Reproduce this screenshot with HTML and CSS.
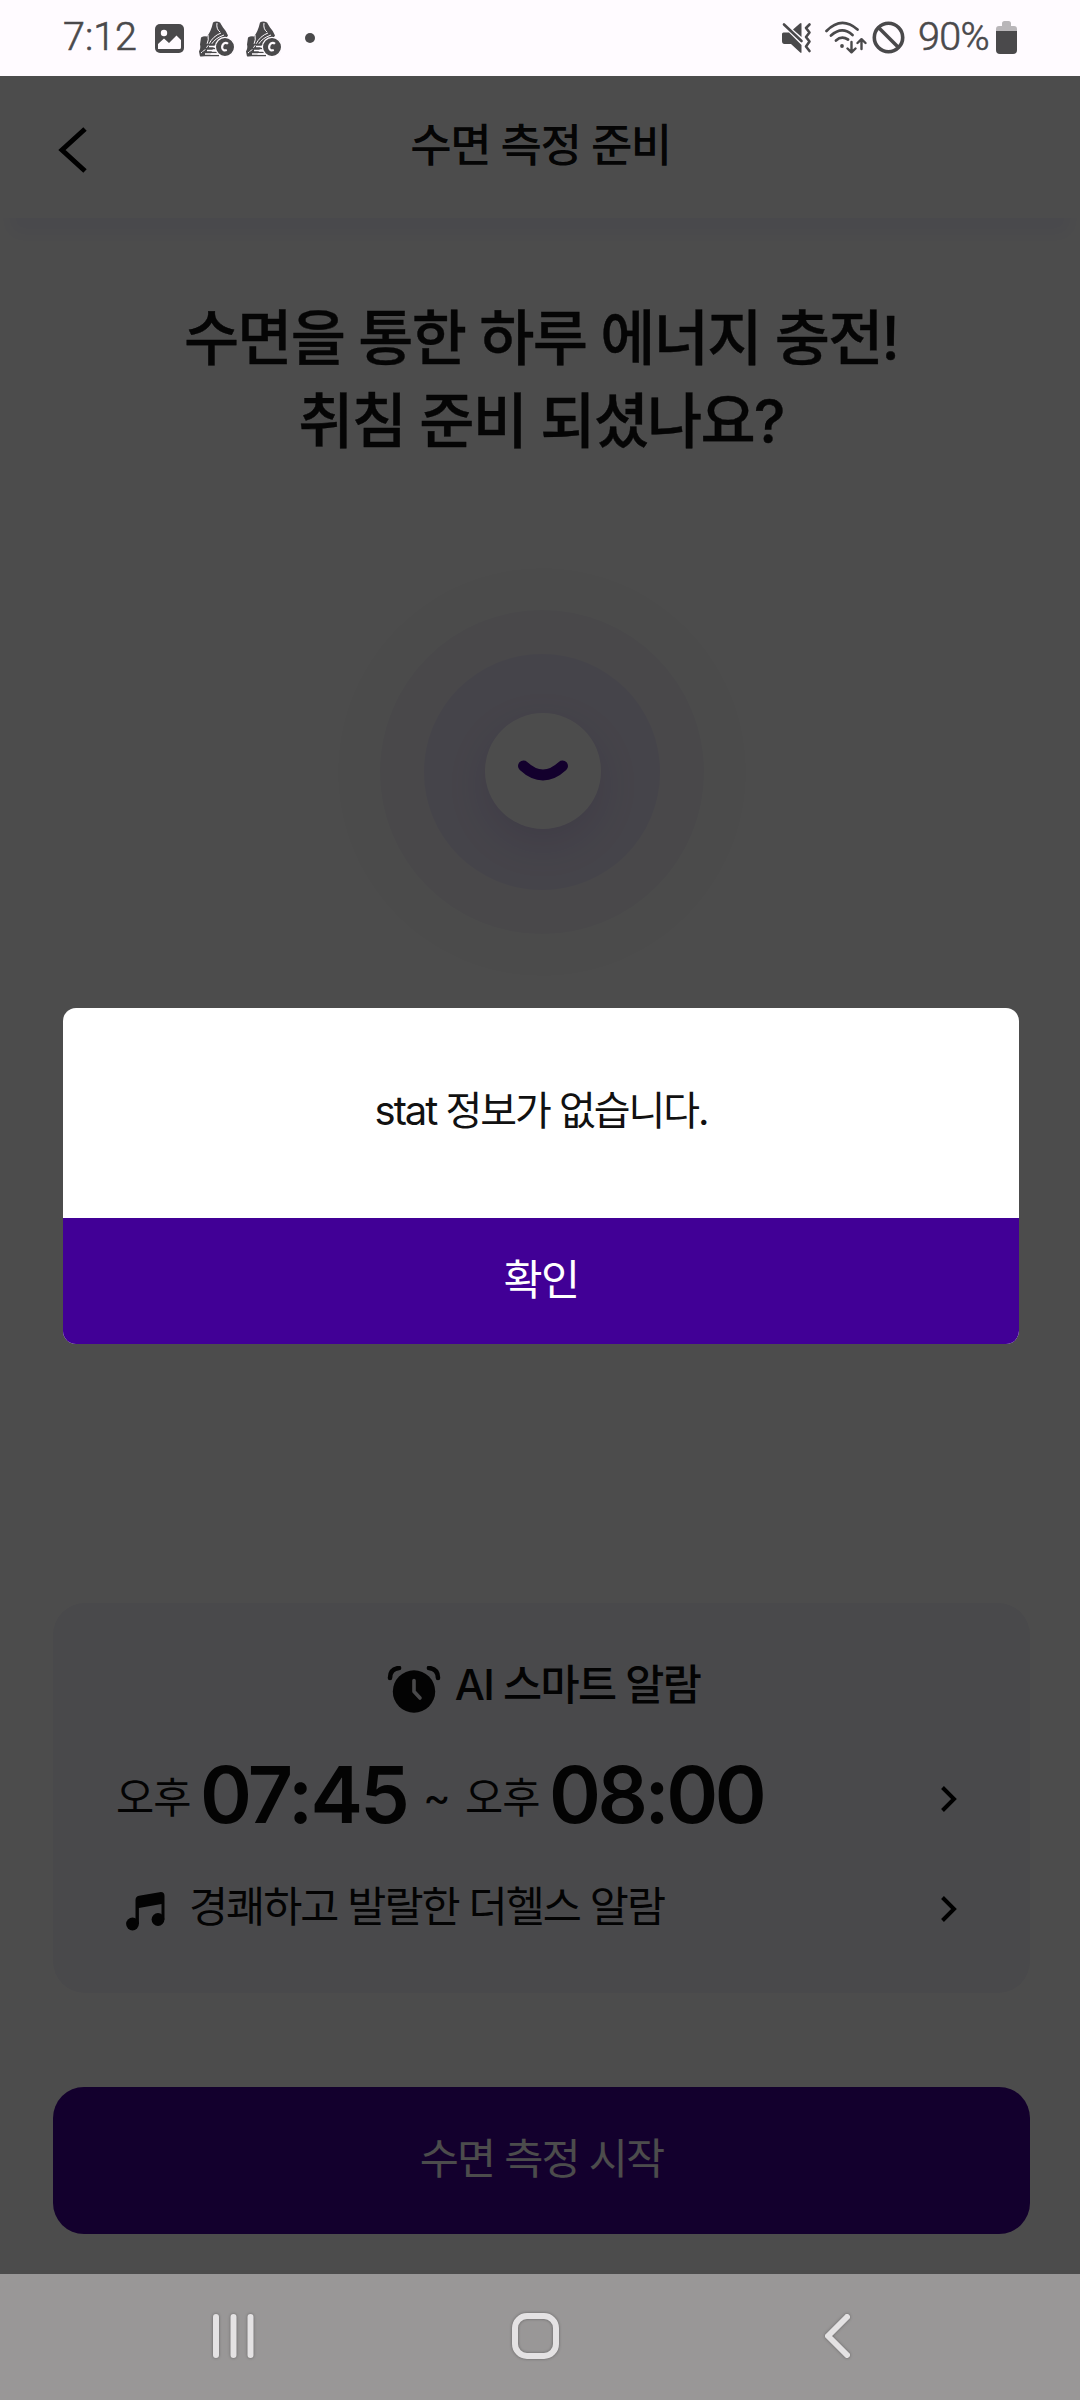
FILE: index.html
```html
<!DOCTYPE html>
<html lang="ko">
<head>
<meta charset="utf-8">
<title>수면 측정 준비</title>
<link rel="stylesheet" href="styles.css">
</head>
<body>
<div class="phone">
  <div class="status">
    <div class="status-left">
      <span class="clock">7:12</span>
      <svg class="ic-photo" width="29" height="29" viewBox="0 0 29 29"><rect width="29" height="29" rx="5" fill="#4a494b"/><circle cx="9" cy="9" r="3.2" fill="#fffbff"/><path d="M3 25v-5l6-5.500 5 4.500 7.500-7.500 4.500 4.500v7.500q0 1.500-1.500 1.500z" fill="#fffbff"/></svg>
      <svg class="ic-shoe" width="35" height="36" viewBox="0 0 35 36"><use href="#shoe"/></svg>
      <svg class="ic-shoe" width="35" height="36" viewBox="0 0 35 36"><use href="#shoe"/></svg>
      <span class="dot"></span>
    </div>
    <div class="status-right">
      <svg width="31" height="31" viewBox="0 0 31 31" fill="#4a494b"><path d="M1 12q0-1.500 1.500-1.500H8l12.500 12.500v7q0 1.500-1.300.5L10 22H3.500Q1 22 1 19z"/><path d="M12 7.500 18.800 1.500q1.700-1.200 1.700.5V15z"/><path d="M3 2.500 20.500 19" stroke="#4a494b" stroke-width="2.600" stroke-linecap="round"/><path d="M28.500 2.500 25 6l3.500 4.500L25 15l3.500 4.500L25 24.500l3.500 4.500" fill="none" stroke="#4a494b" stroke-width="2.600" stroke-linecap="round" stroke-linejoin="round"/></svg>
      <svg class="ic-wifi" width="43" height="33" viewBox="0 0 43 33" fill="none" stroke="#4a494b" stroke-width="2.700" stroke-linecap="round" stroke-linejoin="round"><path d="M2.500 10Q17.500-5.500 33.500 8.500M7 14.500q11-10 21.500-.5M12 19.500q5.500-5 12-1"/><circle cx="18" cy="25" r="1.900" fill="#4a494b" stroke="none"/><path d="M27.500 21v10M23.500 27.500l4 3.800 4-3.800M37.500 28V18.500M33.500 22l4-3.800 4 3.800" stroke-width="2.400"/></svg>
      <svg class="ic-block" width="33" height="33" viewBox="0 0 33 33" fill="none" stroke="#4a494b" stroke-width="3.600"><circle cx="16.500" cy="16.500" r="14.200"/><path d="m6.500 6.500 20 20"/></svg>
      <span class="percent">90%</span>
      <svg class="ic-batt" width="21" height="33" viewBox="0 0 21 33"><path d="M0 10V8q0-3 3-3h3V2.500Q6 0 8.500 0h4Q15 0 15 2.500V5h3q3 0 3 3v2z" fill="#b9b6b9"/><path d="M0 10h21v19q0 4-4 4H4q-4 0-4-4z" fill="#4a494b"/></svg>
    </div>
  </div>

  <div class="app">
    <header class="header">
      <svg class="back" width="32" height="46" viewBox="0 0 32 46"><path d="M30 2 7 23l23 21" fill="none" stroke="#000" stroke-width="5"/></svg>
      <h1 class="title">수면 측정 준비</h1>
    </header>
    <main class="main">
      <h2 class="lead">수면을 통한 하루 에너지 충전!<br>취침 준비 되셨나요?</h2>
      <div class="ring ring-outer"><div class="ring ring-mid"><div class="ring ring-inner"><div class="face">
        <svg width="52" height="22" viewBox="0 0 52 22"><path d="M6.500 6Q26 24 45.500 6" fill="none" stroke="#410096" stroke-width="11" stroke-linecap="round"/></svg>
      </div></div></div></div>
      <section class="card">
        <div class="card-head">
          <svg width="54" height="48" viewBox="0 0 54 48"><circle cx="27" cy="25.500" r="21.200" fill="#0a0a0a"/><path d="M27 14.500v11l6 6.500" fill="none" stroke="#f4f4fa" stroke-width="3.600" stroke-linecap="round" stroke-linejoin="round"/><path d="M3 12q0-9 9-10M51 12q0-9-9-10" fill="none" stroke="#0a0a0a" stroke-width="4.600" stroke-linecap="round"/></svg>
          <span class="card-title">AI 스마트 알람</span>
        </div>
        <div class="row row-time">
          <span class="ampm">오후</span><span class="time">07:45</span><span class="tilde">~</span><span class="ampm">오후</span><span class="time time-end">08:00</span>
          <svg class="chev" width="18" height="28" viewBox="0 0 18 28"><path d="M2.500 2.500 14 14 2.500 25.500" fill="none" stroke="#000" stroke-width="4"/></svg>
        </div>
        <div class="row row-sound">
          <svg class="note" width="39" height="39" viewBox="0 0 39 39" fill="#0a0a0a"><circle cx="6.500" cy="32" r="6.400"/><circle cx="32" cy="27.500" r="6.400"/><path d="M9.500 32V8q0-3.500 3.500-4.200L33.500.2Q38.500-.5 38.500 4v23.500h-3V12L12.900 16v16z"/></svg>
          <span class="sound">경쾌하고 발랄한 더헬스 알람</span>
          <svg class="chev" width="18" height="28" viewBox="0 0 18 28"><path d="M2.500 2.500 14 14 2.500 25.500" fill="none" stroke="#000" stroke-width="4"/></svg>
        </div>
      </section>
      <button class="start">수면 측정 시작</button>
    </main>
    <div class="overlay">
      <div class="modal">
        <p class="modal-text">stat 정보가 없습니다.</p>
        <button class="modal-ok">확인</button>
      </div>
    </div>
  </div>

  <nav class="nav">
    <svg width="46" height="50" viewBox="0 0 46 50"><path d="M5 6v38M22.500 6v38M39.500 6v38"/></svg>
    <svg width="52" height="52" viewBox="0 0 52 52"><rect x="5" y="6" width="41" height="40" rx="12"/></svg>
    <svg width="36" height="52" viewBox="0 0 36 52"><path d="M27 7 8 26l19 19"/></svg>
  </nav>
</div>

<svg width="0" height="0" class="defs">
  <defs>
    <g id="shoe">
      <path d="M14 1.500q3-2 7 0l3 5q3 3 5 8l-2 3q-9 2-12 8l-4 9-10 1-1-5q2-3 1-7l1-7q3-2 6-1 4-5 6-14z" fill="#4a494b"/>
      <path d="M18 2q-1 6 3 9M22 12q-8 3-12 11-3 6-8 9M9 14q1 5-1 9M25 14q-9 3-13 10" fill="none" stroke="#fffbff" stroke-width="1"/>
      <path d="M7 23.500h13M5 27.500h14M3 31.500h16M2 34.500h18" stroke="#4a494b" stroke-width="1.500"/>
      <path d="M10 25.500h9M8 29.500h11M6 33h13" stroke="#fffbff" stroke-width="1.600"/>
      <circle cx="26" cy="26" r="9.600" fill="#4a494b" stroke="#fffbff" stroke-width="1.200"/>
      <path d="M29 22.800q-2-1.800-4-.5-2.200 1.700-1.800 4.700.8 3.300 4.600 2" fill="none" stroke="#fffbff" stroke-width="2.200"/>
    </g>
  </defs>
</svg>
</body>
</html>
```
FILE: styles.css
```css
* { box-sizing: border-box; margin: 0; padding: 0; }
body { background: #4c4c4c; }
svg { display: block; flex: none; }
.defs { position: absolute; }
button { border: 0; font-family: inherit; }

.phone {
  width: 1080px;
  height: 2400px;
  display: flex;
  flex-direction: column;
  overflow: hidden;
  font-family: Inter, "Noto Sans CJK KR", sans-serif;
  color: #111;
}

/* status bar */
.status {
  height: 76px;
  flex: none;
  background: #fffbff;
  color: #4a494b;
  display: flex;
  justify-content: space-between;
  padding: 0 63px 2px 62px;
  font: 300 39.500px/76px Roboto, sans-serif;
  -webkit-text-stroke: 0.600px #4a494b;
}
.status-left, .status-right { display: flex; align-items: center; }
.clock { width: 93px; padding-left: 1px; white-space: nowrap; }
.ic-photo { margin-top: 3px; }
.ic-shoe { margin: 3px 0 0 12px; }
.ic-photo + .ic-shoe { margin-left: 15px; }
.dot { width: 10px; height: 10px; border-radius: 50%; background: #4a494b; margin: 2px 0 0 24px; }
.ic-wifi { margin-left: 12px; }
.ic-block { margin-left: 5px; }
.percent { width: 71px; margin-left: 13px; letter-spacing: -0.600px; white-space: nowrap; }
.ic-batt { margin-left: 7px; margin-top: 1px; }

/* app */
.app {
  position: relative;
  flex: 1;
  display: flex;
  flex-direction: column;
  background: #fff;
}
.header {
  height: 142px;
  flex: none;
  padding: 0 55px 3px;
  display: grid;
  grid-template-columns: 32px 1fr 32px;
  align-items: center;
  background: #fff;
  box-shadow: 0 26px 18px -10px #f3f3fd;
}
.back { margin-top: 8px; }
.title { text-align: center; font-size: 45px; line-height: 60px; font-weight: 500; letter-spacing: -1.500px; margin-left: 1px; }
.main { flex: 1; display: flex; flex-direction: column; padding: 79px 50px 40px 53px; align-items: stretch; }
.lead { text-align: center; font-size: 60px; line-height: 82.500px; font-weight: 500; letter-spacing: -1.800px; margin-right: 1px; -webkit-text-stroke: 0.400px #111; }

.ring, .face { border-radius: 50%; display: flex; align-items: center; justify-content: center; flex: none; }
.ring-outer { width: 408px; height: 408px; background: #fcfcfc; align-self: center; margin: 106px 0 0 0; }
.ring-mid { width: 324px; height: 324px; background: #f3f2f8; }
.ring-inner { width: 236px; height: 236px; background: #e8e3f7; }
.face { width: 116px; height: 116px; background: #fff; box-shadow: 0 14px 40px rgba(65, 0, 150, 0.120); margin: -2px 0 0 3px; }

.card {
  height: 390px;
  margin-top: 627px;
  background: #f4f4fa;
  border-radius: 32px;
  padding: 51px 72px 0 63px;
  color: #0a0a0a;
}
.card-head { display: flex; justify-content: center; align-items: center; gap: 14px; height: 62px; margin-left: 13px; }
.card-head svg { margin-top: 10px; }
.card-title { font-size: 42.500px; line-height: 60px; font-weight: 500; letter-spacing: -1.600px; }
.row { display: flex; align-items: center; white-space: nowrap; }
.row-time { height: 96px; margin-top: 31px; }
.ampm { width: 84px; font-size: 41.500px; line-height: 50px; letter-spacing: -1px; padding-top: 6px; }
.time { width: 223px; font-size: 78.750px; line-height: 96px; font-weight: 600; letter-spacing: -2.600px; }
.time-end { letter-spacing: -3.400px; }
.tilde { width: 42px; font-size: 42px; line-height: 50px; padding-top: 4px; }
.chev { margin-left: auto; margin-top: 7px; }
.row-sound { height: 62px; margin-top: 33px; padding-left: 10px; }
.note { margin-top: 8px; }
.sound { margin-left: 24px; font-size: 42.500px; line-height: 60px; letter-spacing: -2px; }
.row-sound .chev { margin-top: 4px; }

.start {
  height: 147px;
  margin-top: 94px;
  border-radius: 31px;
  background: #410096;
  color: #fff;
  font-size: 42.500px;
  letter-spacing: -1.900px;
  padding-bottom: 10px;
}

/* dialog */
.overlay {
  position: absolute;
  inset: 0;
  background: rgba(0, 0, 0, 0.700);
  display: flex;
  align-items: center;
  padding: 2px 61px 0 63px;
}
.modal { flex: 1; height: 336px; border-radius: 13px; overflow: hidden; background: #fff; display: flex; flex-direction: column; }
.modal-text { height: 210px; line-height: 206px; text-align: center; font-size: 40px; letter-spacing: -2.050px; }
.modal-ok { flex: 1; background: #410096; color: #fff; font-size: 42.500px; letter-spacing: -1.500px; padding-bottom: 9px; }

/* system navigation */
.nav {
  height: 126px;
  flex: none;
  background: #999797;
  display: flex;
  align-items: center;
  justify-content: space-between;
  padding: 0 224px 2px 211px;
}
.nav svg { fill: none; stroke: #e4e2e3; stroke-width: 6px; stroke-linecap: round; stroke-linejoin: round; filter: drop-shadow(0 0 1.500px rgba(0, 0, 0, 0.350)); }
.nav svg:nth-child(2) { margin-right: 5px; }
```
